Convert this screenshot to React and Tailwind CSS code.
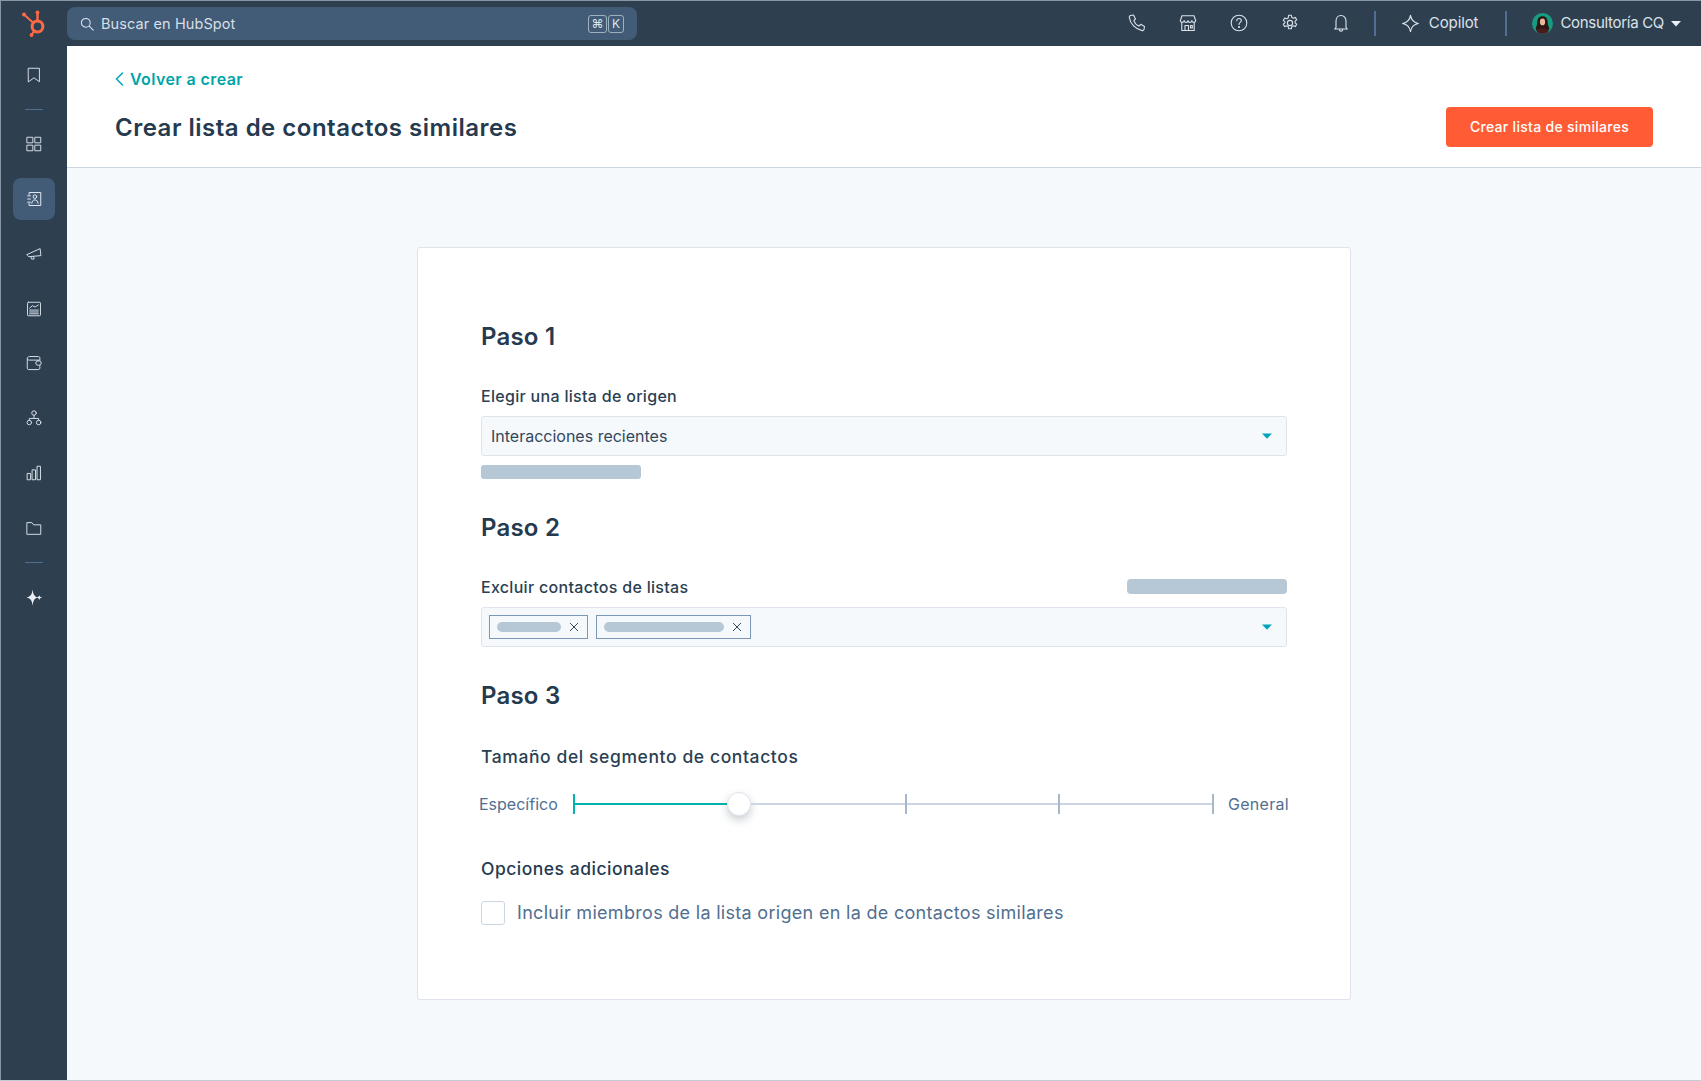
const S = ({ children, size = 20, w = 1.3, className = "" }) => (
  <svg width={size} height={size} viewBox="0 0 20 20" fill="none" stroke="currentColor" strokeWidth={w} strokeLinecap="round" strokeLinejoin="round" className={className}>{children}</svg>
);

const Logo = () => (
  <svg width="28" height="28" viewBox="0 0 28 28" fill="none" stroke="#ff6a45" strokeLinecap="round">
    <circle cx="16.5" cy="16.5" r="5.4" strokeWidth="3" />
    <path d="M16.5 11V3" strokeWidth="2.4" />
    <path d="M12.4 13 3.600 5" strokeWidth="2" />
    <path d="M13.500 20.600 10.500 24.800" strokeWidth="2" />
    <circle cx="16.5" cy="2.500" r="1.9" fill="#ff6a45" stroke="none" />
    <circle cx="3" cy="4.500" r="2" fill="#ff6a45" stroke="none" />
    <circle cx="10.500" cy="25" r="1.9" fill="#ff6a45" stroke="none" />
  </svg>
);

const navIcons = {
  bookmark: <path d="M4 2.5h12v15l-6-4.4-6 4.4z" />,
  grid: <><rect x="2.5" y="2.5" width="6.2" height="6.2" /><rect x="11.3" y="2.5" width="6.2" height="6.2" /><rect x="2.5" y="11.3" width="6.2" height="6.2" /><rect x="11.3" y="11.3" width="6.2" height="6.2" /></>,
  contacts: <><path d="M4.500 5V2.800h13v14.400h-13V15" /><path d="M3 6.500h3M3 10h3M3 13.500h3" /><circle cx="11" cy="7.400" r="2" /><path d="M7.500 14.800c.3-2.500 1.700-3.800 3.500-3.800s3.200 1.300 3.500 3.800" /></>,
  mega: <><path d="M2.500 10.500 16.800 4l.9 7.800-13.400 1.200c-1.200-.5-1.900-1.400-1.800-2.500z" /><path d="m6.500 13 .8 2.600h2.800l-.6-2.900" /></>,
  news: <><rect x="2.800" y="2.500" width="14.400" height="15" rx="1" /><path d="M5.200 9l3-2.700 3 1.500 3.600-2.300" /><path d="M5.200 11.200h9.600M5.200 13.300h9.600M5.200 15.300h9.600" /></>,
  wallet: <><path d="M16.500 7V4.500c0-1-.6-1.700-1.700-1.700H5c-1.400 0-2.500 1-2.500 2.300v10.600c0 1 .7 1.600 1.600 1.600h10.800c1 0 1.600-.6 1.600-1.600V13" /><path d="M2.700 5.500c.4.900 1 1.300 2 1.300h10.800" /><rect x="12" y="7.500" width="6" height="5" rx="2.500" /></>,
  org: <><circle cx="10" cy="4.500" r="2.500" /><circle cx="4.800" cy="15" r="2.500" /><circle cx="15.200" cy="15" r="2.500" /><path d="M10 7v3.500M4.800 12.500v-2h10.400v2" /></>,
  chart: <><rect x="2.800" y="10.500" width="3.400" height="7" /><rect x="8.300" y="6.500" width="3.400" height="11" /><rect x="13.800" y="2.500" width="3.400" height="15" /></>,
  folder: <path d="M2.500 4h5.200l1.800 2.500h8V17h-15z" />,
};

const NavIcon = ({ name, active }) => (
  <div className={`flex items-center justify-center ${active ? "w-[42px] h-[42px] rounded-lg bg-[#425b76] text-[#e4ebf2]" : "w-[42px] h-[42px] text-[#d5dee7]"}`}>
    <S size={18} w={1.1}>{navIcons[name]}</S>
  </div>
);

const Sep = () => <div className="w-[18px] h-px bg-[#516f90]" />;

const Caret = () => (
  <svg width="10" height="6" viewBox="0 0 10 6"><path d="M0 .5h10L5 5.800z" fill="#00a4bd" /></svg>
);

const Skel = ({ className }) => <div className={`bg-[#b6c7d6] ${className}`} />;

const Chip = ({ chip, bar }) => (
  <div className={`${chip} h-6 flex items-center justify-between pl-[7px] pr-[8px] border border-[#7c98b6]`}>
    <Skel className={`${bar} h-[10px] rounded-full`} />
    <svg width="10" height="10" viewBox="0 0 10 10" stroke="#33475b" strokeWidth="1"><path d="M1 1l8 8M9 1l-8 8" /></svg>
  </div>
);

const Step = ({ children, className }) => (
  <h2 className={`text-[24px] leading-[30px] font-semibold text-[#253a4f] tracking-[0.2px] ${className}`}>{children}</h2>
);

const Label = ({ children, className = "" }) => (
  <div className={`text-[16px] leading-[20px] font-medium text-[#2b3f52] tracking-[0.3px] ${className}`}>{children}</div>
);

export default function App() {
  return (
    <div className="w-[1701px] h-[1081px] flex flex-col overflow-hidden bg-[#f5f9fc] border-b border-[#c5ccd3]" style={{ fontFamily: "Inter, 'Noto Sans', sans-serif" }}>
      <header className="h-[46px] shrink-0 bg-[#2e3f50] flex items-center border-t border-l border-[#8a96a3] border-b-[#9aa5b0]">
        <div className="w-[66px] shrink-0 flex justify-center pl-[2px]"><Logo /></div>
        <div className="w-[570px] h-[33px] rounded-lg bg-[#425b76] flex items-center pl-[12px] pr-[13px] text-[#dfe6ed]">
          <S size={16} w={1.3}><circle cx="8.500" cy="8.500" r="5.500" /><path d="m12.800 12.800 5 5" /></S>
          <span className="ml-[6px] text-[14.5px] text-[#d7dfe7] tracking-[0.1px]">Buscar en HubSpot</span>
          <div className="ml-auto flex gap-[1px]">
            <span className="w-[19px] h-[18px] border border-[#9fb0c2] rounded-[3px] text-[12px] leading-[16px] text-center">⌘</span>
            <span className="w-[16px] h-[18px] border border-[#9fb0c2] rounded-[3px] text-[12px] leading-[16px] text-center">K</span>
          </div>
        </div>
        <div className="ml-auto flex items-center text-[#dbe3ea]">
          <div className="flex items-center gap-[31px] -mt-[1px]">
            <S size={20} w={1.1}><path d="M3.500 2.500 6.500 2l2 4-1.700 1.600c.8 2.300 2.800 4.400 5.200 5.400L13.800 11.300l3.700 2.200-.5 2.800c-.2 1-1 1.500-1.800 1.300C8.500 16.400 3.200 10.800 2.300 4.300c-.1-.9.400-1.600 1.200-1.800z" /></S>
            <S size={20} w={1.1}><path d="M4 2.800h12l1.700 4.700c0 1.100-.8 1.900-1.900 1.900s-1.900-.8-1.900-1.900c0 1.100-.8 1.900-1.900 1.900S10 8.600 10 7.500c0 1.100-.8 1.900-2 1.900S6.100 8.600 6.100 7.500c0 1.100-.8 1.900-1.900 1.900S2.300 8.600 2.300 7.500z" /><path d="M3.800 9.500v8h12.400v-8M7 17.500v-5h3.500v5M12.500 12.500h1.800v2.500h-1.800z" /></S>
            <S size={20} w={1.1}><circle cx="10" cy="10" r="7.800" /><path d="M7.700 7.800c0-1.400 1-2.300 2.300-2.300s2.300.9 2.300 2.100c0 1.800-2.300 1.900-2.300 3.900" /><circle cx="10" cy="14" r=".5" fill="currentColor" /></S>
            <S size={20} w={1.1}><circle cx="10" cy="10" r="2.600" /><path d="M8.600 2.300h2.800l.4 2.100 1.500.8 2-.8 1.400 2.400-1.600 1.400v1.600l1.600 1.400-1.400 2.400-2-.8-1.500.8-.4 2.100H8.600l-.4-2.100-1.500-.8-2 .8-1.400-2.400 1.600-1.400V8.800L3.300 7.400l1.400-2.400 2 .8 1.500-.8z" /></S>
            <S size={20} w={1.1}><path d="M5 14.500V8.500C5 5 7 2.500 10 2.500s5 2.500 5 6v6l1.300 1.500H3.700z" /><path d="M8.300 16.500c0 1 .8 1.700 1.700 1.700s1.700-.7 1.700-1.700" /></S>
          </div>
          <div className="w-[2px] h-[25px] bg-[#516f90] ml-[23px]" />
          <div className="ml-[25px] flex items-center gap-[9px]">
            <S size={19} w={1.2}><path d="M10 1.500c.8 5 3.300 7.500 8.300 8.500-5 1-7.500 3.500-8.300 8.500-.8-5-3.300-7.500-8.300-8.500 5-1 7.500-3.500 8.300-8.500z" /></S>
            <span className="text-[15px] text-[#dbe3ea] tracking-[-0.1px]">Copilot</span>
          </div>
          <div className="w-[2px] h-[25px] bg-[#516f90] ml-[27px]" />
          <div className="ml-[25px] mr-[20px] flex items-center">
            <svg width="21" height="21" viewBox="0 0 20 20">
              <circle cx="10" cy="10" r="10" fill="#169c80" />
              <path d="M10 3c-3.500 0-5 2.500-5 6 0 2.500-1 4-1.500 6 2 4 11 4 13 0-.5-2-1.500-3.500-1.500-6 0-3.500-1.500-6-5-6z" fill="#2c1410" />
              <ellipse cx="10" cy="8.500" rx="2.500" ry="3.200" fill="#e8b9a0" />
              <path d="M4 16.500c2-2.500 10-2.500 12 0-1.500 4.500-10.500 4.500-12 0z" fill="#4b1a1c" />
            </svg>
            <span className="ml-[7px] text-[15px] text-[#dbe3ea] tracking-[-0.3px]">Consultoría CQ</span>
            <svg className="ml-[7px]" width="10" height="6" viewBox="0 0 10 6"><path d="M0 0h10L5 5.500z" fill="#eaf0f6" /></svg>
          </div>
        </div>
      </header>

      <div className="flex flex-1 min-h-0">
        <aside className="w-[67px] shrink-0 bg-[#2e3f50] border-l border-[#8a96a3] flex flex-col items-center">
          <div className="mt-[8px]"><NavIcon name="bookmark" /></div>
          <div className="mt-[13px]"><Sep /></div>
          <div className="mt-[13px]"><NavIcon name="grid" /></div>
          <div className="mt-[13px]"><NavIcon name="contacts" active /></div>
          <div className="mt-[13px]"><NavIcon name="mega" /></div>
          <div className="mt-[13px]"><NavIcon name="news" /></div>
          <div className="mt-[12px]"><NavIcon name="wallet" /></div>
          <div className="mt-[13px]"><NavIcon name="org" /></div>
          <div className="mt-[13px]"><NavIcon name="chart" /></div>
          <div className="mt-[13px]"><NavIcon name="folder" /></div>
          <div className="mt-[13px]"><Sep /></div>
          <div className="mt-[13px] flex items-center justify-center h-[42px] text-white">
            <svg width="17" height="17" viewBox="0 0 18 18" fill="#eaf0f6"><path d="M7 .5Q7.600 8.400 12.500 9 7.600 9.600 7 17.500 6.400 9.600 .5 9 6.400 8.400 7 .5z" /><path d="M14 6Q14.200 8.800 17.500 9 14.200 9.200 14 12 13.800 9.200 10.800 9 13.800 8.800 14 6z" /></svg>
          </div>
        </aside>

        <main className="flex-1 min-w-0 flex flex-col">
          <div className="h-[122px] shrink-0 bg-white border-b border-[#cbd6e2] flex items-end justify-between pl-[48px] pr-[48px] pb-[20px]">
            <div className="mb-[4px]">
              <div className="flex items-center gap-[6px] text-[#00a4a8] mb-[24px]">
                <svg width="9" height="14" viewBox="0 0 9 14" fill="none" stroke="#00a4bd" strokeWidth="1.500" strokeLinecap="round" strokeLinejoin="round"><path d="M7.500 1 1.500 7l6 6" /></svg>
                <span className="text-[16px] leading-[20px] font-semibold tracking-[0.4px]">Volver a crear</span>
              </div>
              <h1 className="text-[24px] leading-[30px] font-semibold text-[#253a4f] tracking-[0.5px]">Crear lista de contactos similares</h1>
            </div>
            <button className="w-[207px] h-[40px] pb-[2px] rounded-[4px] bg-[#ff5c35] text-white text-[14px] font-medium tracking-[0.3px]">Crear lista de similares</button>
          </div>

          <div className="flex-1 flex justify-center items-start pt-[79px]">
            <section className="w-[934px] h-[753px] bg-white border border-[#dfe3eb] rounded-[3px] px-[63px] pt-[74px]">
              <Step>Paso 1</Step>
              <Label className="mt-[34px]">Elegir una lista de origen</Label>
              <div className="mt-[10px] h-[40px] bg-[#f5f9fc] border border-[#dfe3eb] rounded-[3px] flex items-center justify-between pl-[9px] pr-[14px]">
                <span className="text-[16px] text-[#33475b]">Interacciones recientes</span>
                <Caret />
              </div>
              <Skel className="mt-[9px] w-[160px] h-[14px] rounded-[3px]" />

              <Step className="mt-[34px]">Paso 2</Step>
              <div className="mt-[34px] flex items-center justify-between h-[20px]">
                <Label>Excluir contactos de listas</Label>
                <Skel className="w-[160px] h-[15px] rounded-[4px] mb-[2px]" />
              </div>
              <div className="mt-[10px] h-[40px] bg-[#f5f9fc] border border-[#dfe3eb] rounded-[3px] flex items-center pl-[7px] pr-[14px]">
                <div className="flex gap-[8px]">
                  <Chip chip="w-[99px]" bar="w-[64px]" />
                  <Chip chip="w-[155px]" bar="w-[120px]" />
                </div>
                <div className="ml-auto"><Caret /></div>
              </div>

              <Step className="mt-[34px]">Paso 3</Step>
              <Label className="mt-[36px] text-[17.5px] tracking-[0.6px]">Tamaño del segmento de contactos</Label>

              <div className="mt-[25px] flex items-center h-[24px] -mx-[2px]">
                <span className="w-[94px] shrink-0 text-[16px] text-[#516f90]">Específico</span>
                <div className="flex items-center">
                  <div className="w-[154px] h-[20px] border-l-2 border-[#00b3ac] flex items-center"><div className="w-full h-[2px] bg-[#00b3ac]" /></div>
                  <div className="w-[24px] h-[24px] rounded-full bg-white border border-[#dfe3eb] shadow-[0_4px_8px_rgba(45,62,80,0.25)] shrink-0" />
                  <div className="w-[156px] h-[20px] border-r-2 border-[#a6b9cc] flex items-center"><div className="w-full h-[2px] bg-[#cbd6e2]" /></div>
                  <div className="w-[153px] h-[20px] border-r-2 border-[#a6b9cc] flex items-center"><div className="w-full h-[2px] bg-[#cbd6e2]" /></div>
                  <div className="w-[154px] h-[20px] border-r-2 border-[#a6b9cc] flex items-center"><div className="w-full h-[2px] bg-[#cbd6e2]" /></div>
                </div>
                <span className="ml-auto text-[16px] text-[#516f90] tracking-[0.3px]">General</span>
              </div>

              <Label className="mt-[43px] text-[17.5px] tracking-[0.5px] text-[#253a4f]">Opciones adicionales</Label>
              <div className="mt-[22px] flex items-center gap-[12px]">
                <div className="w-[24px] h-[24px] rounded-[3px] bg-white border border-[#cbd6e2]" />
                <span className="text-[18px] leading-[24px] text-[#516f90] tracking-[0.3px]">Incluir miembros de la lista origen en la de contactos similares</span>
              </div>
            </section>
          </div>
        </main>
      </div>
    </div>
  );
}
